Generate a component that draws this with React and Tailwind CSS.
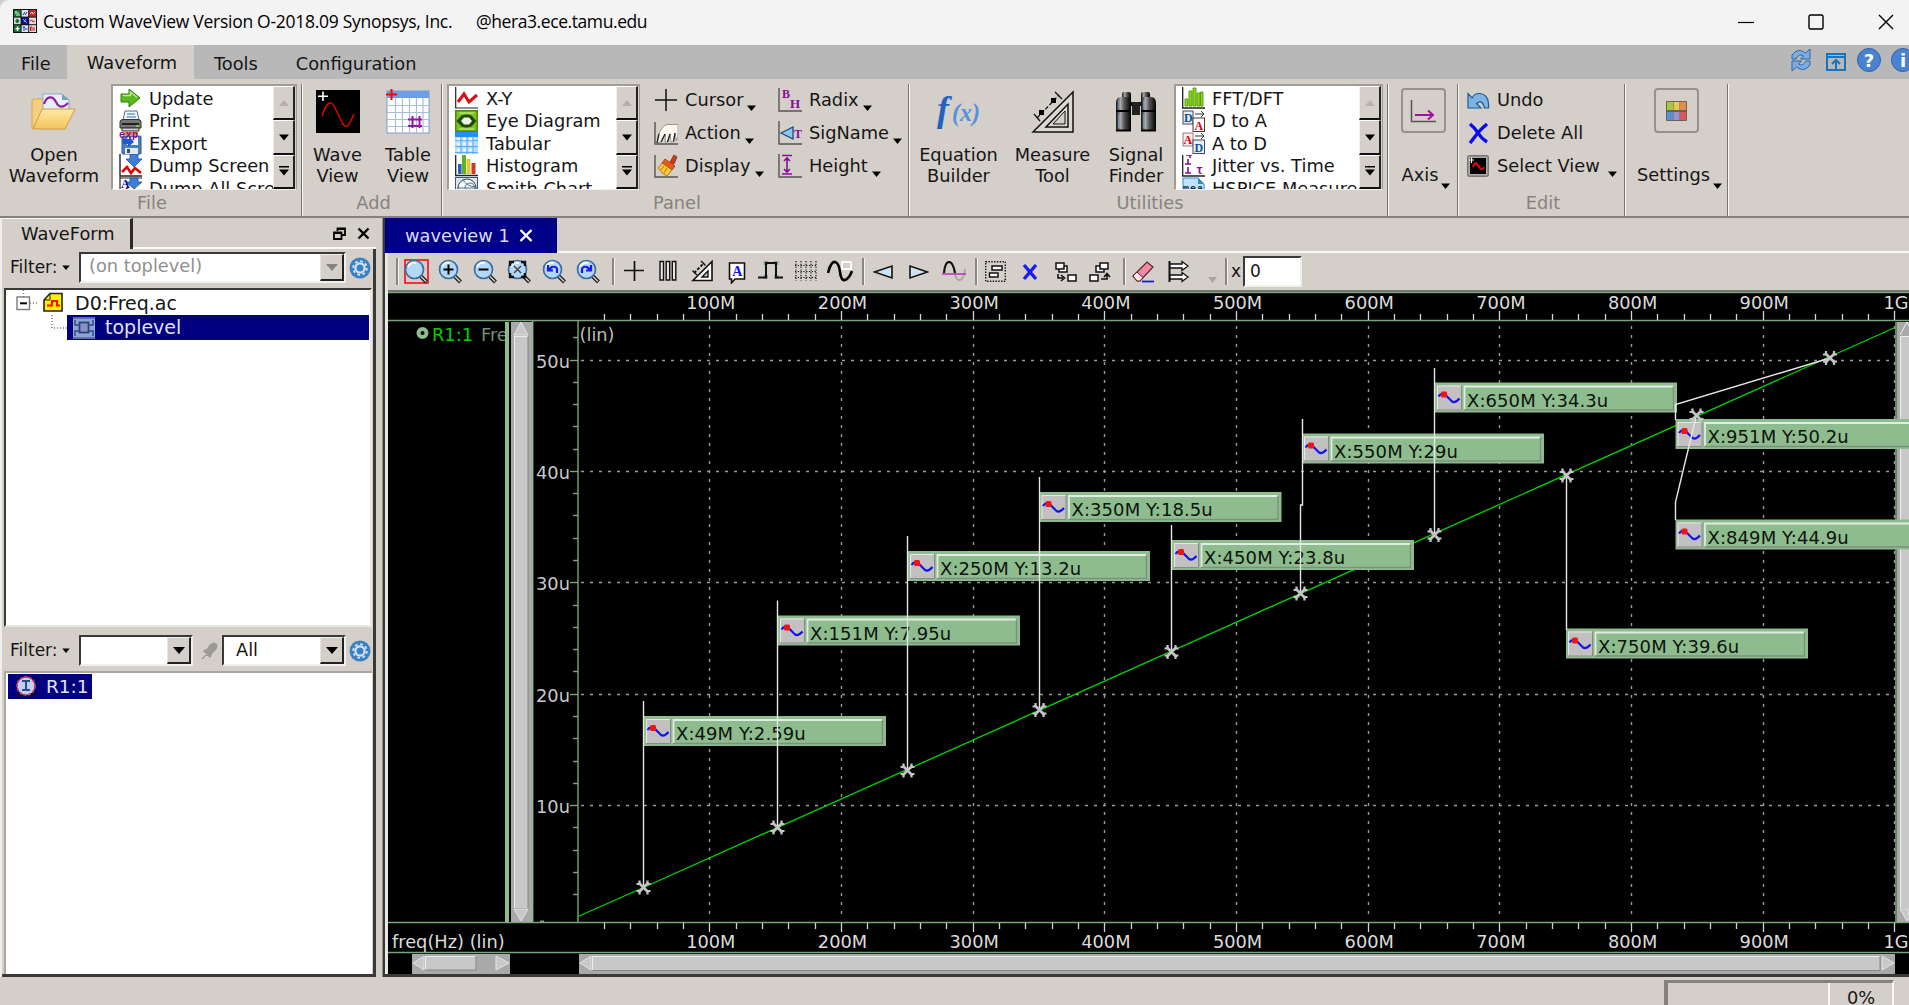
import React from "react";

/* ---------- generic helpers ---------- */

const Caret = ({ className = "" }) => (
  <svg width="9" height="6" viewBox="0 0 9 6" className={className}>
    <path d="M0 0.5H9L4.5 6Z" fill="#000" />
  </svg>
);

const Svg = ({ w = 24, h = 24, vb, children, className = "" }) => (
  <svg width={w} height={h} viewBox={vb || `0 0 ${w} ${h}`} fill="none" className={`shrink-0 ${className}`}>
    {children}
  </svg>
);

/* ---------- icons ---------- */

const AppLogo = () => (
  <Svg>
    <rect width="24" height="24" fill="#111" />
    <rect x="1" y="1" width="6.6" height="6.6" fill="#1c7a34" />
    <rect x="8.6" y="1" width="6.6" height="6.6" fill="#dfe3f0" />
    <rect x="16.2" y="1" width="6.8" height="6.6" fill="#c22a30" />
    <rect x="1" y="8.6" width="6.6" height="6.6" fill="#cfd8cf" />
    <rect x="8.6" y="8.6" width="6.6" height="6.6" fill="#0a1090" />
    <rect x="16.2" y="8.6" width="6.8" height="6.6" fill="#e6dada" />
    <rect x="1" y="16.2" width="6.6" height="6.8" fill="#16702c" />
    <rect x="8.6" y="16.2" width="6.6" height="6.8" fill="#dfe3f4" />
    <rect x="16.2" y="16.2" width="6.8" height="6.8" fill="#e8dcdc" />
    <path d="M2 4H6M3 6H7M2 3H4" stroke="#d5ecd5" />
    <path d="M10 6L12 3M12 6L14 3" stroke="#2034b0" />
    <path d="M17 5L19 3L20 5L22 3" stroke="#fbb" />
    <path d="M2.5 12H6M4.3 10V14" stroke="#16702c" strokeWidth="2" />
    <path d="M10 10L14 14M11 13L13 10" stroke="#8fa0ff" />
    <path d="M17 12L19 11L20 13L22 12" stroke="#c22a30" />
    <path d="M2.5 19.6H6.5M4.5 17.5V22" stroke="#fff" strokeWidth="1.4" />
    <path d="M9.5 18H12M11 18V22M12 20H14.5" stroke="#2034b0" />
    <path d="M17.5 22V18H19V22M21 18V22" stroke="#b02030" />
  </Svg>
);

const OpenFolder = () => (
  <Svg w={46} h={38}>
    <path d="M1 35V8Q1 6 3 6H12L15 10H36V20L30 35Z" fill="#f3cf80" stroke="#d6a548" />
    <path d="M12 1H31L38 7V22H12Z" fill="#e8f1fb" stroke="#8aa7c8" />
    <path d="M31 1V7H38Z" fill="#7f9cc0" />
    <path d="M13 11C16 2 22 3 25 9S32 15 37 10" stroke="#8d1ea8" strokeWidth="2.2" />
    <path d="M2 36L11 16H44L34 36Z" fill="url(#fold)" stroke="#d79a38" />
    <defs>
      <linearGradient id="fold" x1="0" y1="0" x2="0" y2="1">
        <stop offset="0" stopColor="#fde9a8" />
        <stop offset="1" stopColor="#f5c45a" />
      </linearGradient>
    </defs>
  </Svg>
);

const WaveViewIcon = () => (
  <Svg w={44} h={43}>
    <rect width="44" height="43" fill="#000" />
    <path d="M7 1.5V11M2 6.2H12" stroke="#fff" strokeWidth="1.6" />
    <path d="M6 26C10 14 14 9 18 16L27 34C31 40 34 33 38 24" stroke="#f00000" strokeWidth="1.4" />
  </Svg>
);

const TableViewIcon = () => (
  <Svg w={44} h={45}>
    <rect x="1" y="2" width="42" height="42" fill="#fff" stroke="#7f9cc8" />
    <rect x="1" y="2" width="42" height="7" fill="#6f9ee6" />
    <path d="M1 16.5H43M1 23.5H43M1 30.5H43M1 37.5H43M9.5 9V44M16.5 9V44M23.5 9V44M30.5 9V44M37 9V44" stroke="#a9bedb" strokeWidth="1.2" />
    <path d="M0 5.5H11M5.5 0V11" stroke="#f00" strokeWidth="2" />
    <path d="M26.5 27V39M33.5 27V39M22 30.5H36M22 37H36" stroke="#8f1a9c" strokeWidth="2" />
  </Svg>
);

const EquationIcon = () => (
  <svg width="50" height="42" viewBox="0 0 50 42">
    <text x="3" y="30" fontFamily="Liberation Serif, serif" fontStyle="italic" fontWeight="bold" fontSize="36" fill="#2263c0">f</text>
    <text x="18" y="30" fontFamily="Liberation Serif, serif" fontStyle="italic" fontWeight="bold" fontSize="26" fill="#5590dc" textLength="28" lengthAdjust="spacingAndGlyphs">(x)</text>
  </svg>
);

const MeasureIcon = ({ w = 44, h = 44 }) => (
  <Svg w={w} h={h} vb="0 0 44 44">
    <path d="M42 2V42H2Z" stroke="#111" strokeWidth="1.5" fill="#dcd8d2" />
    <path d="M37 14V37H15Z" stroke="#111" strokeWidth="1.5" />
    <path d="M34 21V34H22Z" stroke="#111" strokeWidth="1" fill="#d4cfc8" />
    <path d="M6 28L28 5" stroke="#111" strokeWidth="1.3" strokeDasharray="4 2" />
    <path d="M3 24L9 31M24 2L31 9" stroke="#111" strokeWidth="1.3" />
    <rect x="8" y="20" width="5" height="5" fill="#000" />
    <rect x="20" y="8" width="5" height="5" fill="#000" />
  </Svg>
);

const MeasureSmall = () => (
  <Svg w={22} h={22}>
    <path d="M21 1.5V20.500H2Z" stroke="#111" strokeWidth="1.6" fill="#fff" />
    <path d="M17 11V17H11Z" stroke="#111" strokeWidth="1.4" fill="#d4cfc8" />
    <path d="M3 13L13 3" stroke="#111" strokeWidth="1.8" strokeDasharray="3 1.6" />
    <path d="M1.500 10.500L6 15M10 1L14.500 5.500" stroke="#111" strokeWidth="1.4" />
  </Svg>
);

const Binoculars = () => (
  <Svg w={42} h={42}>
    <defs>
      <linearGradient id="bin" x1="0" x2="1" y1="0" y2="0">
        <stop offset="0" stopColor="#111" />
        <stop offset="0.3" stopColor="#aaa" />
        <stop offset="0.55" stopColor="#555" />
        <stop offset="1" stopColor="#000" />
      </linearGradient>
    </defs>
    <rect x="14" y="11" width="14" height="4" fill="#111" />
    <rect x="17" y="11" width="8" height="13" fill="#222" />
    <rect x="7" y="1" width="9" height="9" rx="2" fill="url(#bin)" />
    <rect x="26" y="1" width="9" height="9" rx="2" fill="url(#bin)" />
    <path d="M1 12Q1 6 6 6H16V40H1Z" fill="url(#bin)" />
    <path d="M26 6H36Q41 6 41 12V40H26Z" fill="url(#bin)" />
    <path d="M1 20H16M26 20H41M1 39.5H16M26 39.5H41" stroke="#000" strokeWidth="2" />
    <path d="M4 9V18M4 23V37M29 9V18M29 23V37" stroke="#7fb0d8" />
  </Svg>
);

const I = {
  update: (
    <Svg w={23} h={22}>
      <path d="M2 7H10V2L21 11L10 20V15H2Z" fill="#5cb81e" stroke="#2f7a08" />
      <path d="M3.5 8.5H11.5V5L18 10.5" stroke="#b9ec8a" strokeWidth="1.4" />
    </Svg>
  ),
  print: (
    <Svg w={23} h={22}>
      <path d="M6 1H18L20 10H4Z" fill="#f4f8fc" stroke="#5b6b80" />
      <path d="M8 4H16M7.5 7H17" stroke="#6b9bd0" strokeWidth="1.3" />
      <path d="M1 12Q1 9.5 4 9.5H19Q22 9.5 22 12V18H1Z" fill="#777" stroke="#333" />
      <path d="M3 18H20V21H3Z" fill="#ccc" stroke="#333" />
      <path d="M3 14H20" stroke="#222" strokeWidth="2" />
      <rect x="17" y="15" width="3" height="2" fill="#5fdc3c" />
    </Svg>
  ),
  exp: (
    <Svg w={23} h={23}>
      <rect x="3" y="4" width="19" height="18" rx="1" fill="#4d7fbd" stroke="#2a568f" />
      <rect x="8" y="5" width="11" height="8" fill="#eef4fa" />
      <rect x="6" y="16" width="13" height="6" fill="#dfe8ee" />
      <rect x="8" y="17" width="3" height="4" fill="#405060" />
      <path d="M4 7L10 7V4L15 10L9 15V12H4Z" fill="#1f58d0" />
      <rect x="5" y="0" width="14" height="3" fill="#ff8a1c" />
      <text x="0" y="6" fontSize="10" fontWeight="bold" fontFamily="Liberation Mono" fill="#8a0c9c" textLength="19">exp</text>
    </Svg>
  ),
  dump: (
    <Svg w={23} h={23}>
      <path d="M1 0V22H23" stroke="#222" strokeWidth="1.4" />
      <path d="M11 0H19V5H23L15 13L7 5H11Z" fill="#3d7fd6" stroke="#1c4f9c" strokeWidth="0.8" />
      <path d="M3 18L8 13L12 19L16 14L22 19" stroke="#e00000" strokeWidth="2.6" />
    </Svg>
  ),
  dumpAll: (
    <Svg w={23} h={23}>
      <path d="M1 0V22H23M1 1H23" stroke="#222" strokeWidth="1.2" />
      <path d="M11 1H19V5H23L15 12L7 5H11Z" fill="#3d7fd6" stroke="#1c4f9c" strokeWidth="0.8" />
      <text x="2" y="11" fontSize="12" fontWeight="bold" fontFamily="Liberation Serif" fill="#00109a">A</text>
      <path d="M3 18L8 12L12 18L16 13L22 18" stroke="#e00000" strokeWidth="2.4" />
    </Svg>
  ),
  xy: (
    <Svg w={23} h={22}>
      <path d="M0.7 0V21H23" stroke="#222" strokeWidth="1.2" />
      <path d="M3 15L9 7L14 15L22 8" stroke="#dc0c14" strokeWidth="3" />
    </Svg>
  ),
  eye: (
    <Svg w={23} h={22}>
      <rect width="23" height="22" fill="#4c8a0c" />
      <rect x="1.5" y="1.5" width="20" height="19" fill="#7cc31e" />
      <path d="M1.500 11L6.500 5.500Q11.500 3.500 16.500 5.500L21.500 11L16.500 16.500Q11.500 18.500 6.500 16.500Z" fill="#1f4a06" />
      <path d="M6 11L9 7.500H14L17 11L14 14.500H9Z" fill="#eef4e2" />
      <path d="M4 3H19M4 19H19" stroke="#b4e468" strokeWidth="1.4" />
    </Svg>
  ),
  tab: (
    <Svg w={23} h={22}>
      <rect width="23" height="22" fill="#b6dcff" />
      <rect width="23" height="5" fill="#1e90ff" />
      <path d="M0 8.5H23M0 14.5H23M0 20.5H23M6 5V22M12 5V22M18 5V22" stroke="#4ea7f4" strokeWidth="0.9" />
      <path d="M2 7H5M8 7H11M14 7H17M2 12H5M8 12H11M14 12H17M2 18H5M8 18H11M14 18H17" stroke="#eef8ff" strokeWidth="2.4" />
    </Svg>
  ),
  hist: (
    <Svg w={23} h={22}>
      <path d="M0.7 0V20.5H23" stroke="#222" strokeWidth="1.3" />
      <rect x="3" y="9" width="3.6" height="10" fill="#2860b8" />
      <rect x="7" y="0" width="4" height="19" fill="#5ab428" />
      <rect x="11.5" y="4" width="4" height="15" fill="#e6c63a" />
      <rect x="16.5" y="8" width="4" height="11" fill="#cc3a2a" />
    </Svg>
  ),
  smith: (
    <Svg w={23} h={22}>
      <rect x="0.5" y="0.5" width="22" height="21" fill="#dbe7f0" stroke="#44566a" />
      <circle cx="12" cy="11" r="9" stroke="#34465a" fill="#f6fafc" />
      <circle cx="15" cy="11" r="5" stroke="#4f7390" />
      <path d="M2 11H22M8 2Q10 9 21 10" stroke="#4f7390" />
    </Svg>
  ),
  fft: (
    <Svg w={23} h={22}>
      <path d="M0.7 0V21H23" stroke="#222" strokeWidth="1.3" />
      <path d="M3 12H6V19H3ZM7 4H10V19H7ZM11 1H14V19H11ZM15 6H18V19H15ZM18.5 5H21V19H18.5Z" fill="#8ed51c" stroke="#4c9a06" strokeWidth="0.9" />
    </Svg>
  ),
  d2a: (
    <Svg w={23} h={22}>
      <rect x="1" y="1" width="10" height="13" fill="#e4edf6" stroke="#446" />
      <text x="2" y="11.5" fontSize="12" fontWeight="bold" fontFamily="Liberation Serif" fill="#154f96">D</text>
      <path d="M13 4H21M19 1L22 4L19 7" stroke="#333" />
      <rect x="11" y="8" width="11.5" height="13.5" fill="#fff" stroke="#533" />
      <text x="12.5" y="19.5" fontSize="12" fontWeight="bold" fontFamily="Liberation Serif" fill="#e00010">A</text>
    </Svg>
  ),
  a2d: (
    <Svg w={23} h={22}>
      <rect x="1" y="1" width="10" height="13" fill="#fbeaea" stroke="#533" strokeWidth="0.6" />
      <text x="1.5" y="11.5" fontSize="12" fontWeight="bold" fontFamily="Liberation Serif" fill="#e00010">A</text>
      <path d="M13 4H21M19 1L22 4L19 7" stroke="#333" />
      <rect x="11" y="8" width="11.5" height="13.5" fill="#e4f2fb" stroke="#446" />
      <text x="12.5" y="19.5" fontSize="12" fontWeight="bold" fontFamily="Liberation Serif" fill="#154f96">D</text>
    </Svg>
  ),
  jitter: (
    <Svg w={23} h={22}>
      <path d="M0.7 0V21H23" stroke="#222" strokeWidth="1.3" />
      <path d="M3 18H9M6 12V18M3 9H9M6 4V9M4 0H10M8 0V3" stroke="#8a0c9c" strokeWidth="1.6" />
      <text x="14" y="19" fontSize="12" fontWeight="bold" fontFamily="Liberation Mono" fill="#8a0c9c">τ</text>
    </Svg>
  ),
  hspice: (
    <Svg w={23} h={22}>
      <path d="M1 1H16L22 7V21H1Z" fill="#bfe4fb" stroke="#2a8fd0" />
      <path d="M16 1V7H22Z" fill="#2a8fd0" />
      <text x="1" y="15" fontSize="10" fontWeight="bold" fontFamily="Liberation Mono" fill="#102c48" textLength="20">mea</text>
    </Svg>
  ),
  cursor: (
    <Svg w={24} h={24}>
      <path d="M12 1V23M1 12H23" stroke="#111" strokeWidth="1.5" />
    </Svg>
  ),
  action: (
    <Svg w={24} h={24}>
      <path d="M1 1V23H24" stroke="#555" strokeWidth="1.4" />
      <path d="M3 22L4.500 14Q7 6 13 3.500H24V16L22.500 19.500L21 12L19.500 20.500L17 21L16 13L13.500 21H11L11.500 13L7 21Z" fill="#fdf8ee" stroke="#8a8274" strokeWidth="0.8" />
      <path d="M3 22L5 13M7 21L11 13M13.500 21L16 13M19.500 20.500L21 12" stroke="#222" strokeWidth="1.3" />
    </Svg>
  ),
  display: (
    <Svg w={24} h={24}>
      <path d="M1 1V23H24" stroke="#555" strokeWidth="1.4" />
      <path d="M16 8L20 1L23 3L20 10Z" fill="#cc3f14" stroke="#7a2008" strokeWidth="0.7" />
      <path d="M11 5L21 12L18 16L8 9Z" fill="#e8571c" stroke="#8a2a0a" strokeWidth="0.7" />
      <path d="M8 9L18 16L13 22Q8 20 4 14Z" fill="#f7c83c" stroke="#a0680c" strokeWidth="0.8" />
      <path d="M7 16L10 12M10 19L13 14" stroke="#b8780c" />
    </Svg>
  ),
  radix: (
    <Svg w={24} h={24}>
      <path d="M1 0V23H24" stroke="#555" strokeWidth="1.4" />
      <text x="4" y="9.5" fontSize="12" fontWeight="bold" fontFamily="Liberation Serif" fill="#8a0c9c">B</text>
      <text x="12" y="20" fontSize="13" fontWeight="bold" fontFamily="Liberation Serif" fill="#8a0c9c">H</text>
    </Svg>
  ),
  signame: (
    <Svg w={24} h={24}>
      <path d="M1 0V23H24" stroke="#555" strokeWidth="1.4" />
      <path d="M3 12L15 6V18Z" fill="#8cc4ea" stroke="#1b4c7c" strokeWidth="1.3" />
      <text x="16" y="17" fontSize="12" fontWeight="bold" fontFamily="Liberation Serif" fill="#8a0c9c">T</text>
    </Svg>
  ),
  height: (
    <Svg w={24} h={24}>
      <path d="M1 0V23H24" stroke="#555" strokeWidth="1.4" />
      <path d="M4 1.5H14M4 20H14M9 4V18M6 7L9 4L12 7M6 15L9 18L12 15" stroke="#8a0c9c" strokeWidth="1.6" />
    </Svg>
  ),
  undo: (
    <Svg w={23} h={20}>
      <path d="M1 3.500V18H14L9.500 13.500Q15 8.500 17.500 18H21.500Q22.500 3.500 11.500 3.500Q7.500 3.500 5 8Z" fill="#7db4e4" stroke="#1f5a96" strokeWidth="1.2" />
    </Svg>
  ),
  del: (
    <Svg w={23} h={22}>
      <path d="M3 2Q8 6 11 11T20 20M20 2Q13 8 10 12T3 21" stroke="#0a0af0" strokeWidth="3.4" />
    </Svg>
  ),
  sel: (
    <Svg w={22} h={22}>
      <rect x="0.7" y="0.7" width="20.6" height="20.6" rx="2" fill="#aaa" stroke="#777" strokeWidth="1.4" />
      <rect x="3" y="3" width="16" height="16" fill="#000" />
      <path d="M6 12Q8 5 11.500 11T17 12" stroke="#f00" strokeWidth="1.8" />
      <path d="M2 5H7M4.5 2.5V8" stroke="#fff" strokeWidth="1.2" />
    </Svg>
  ),
};

/* ---------- ribbon parts ---------- */

const Sep = () => <div className="mt-[5px] h-[132px] w-[2px] shrink-0 border-r border-l border-r-[#f8f8f5] border-l-[#77746e]" />;

const Group = ({ label, className, children }) => (
  <div className={`flex shrink-0 flex-col ${className}`}>
    <div className="flex h-[112px]">{children}</div>
    <div className="h-[22px] pl-[3px] text-center leading-[23px] text-[#86837c]">{label}</div>
  </div>
);

const Tall = ({ icon, lines, className }) => (
  <div className={`flex shrink-0 flex-col items-center ${className}`}>
    <div className="flex h-[65px] items-center pb-[1px] pt-[1px]">{icon}</div>
    {lines.map((l) => (
      <div key={l} className="h-[20.5px] text-center leading-[21px] whitespace-nowrap">{l}</div>
    ))}
  </div>
);

const ListBox = ({ items, className, gap = "gap-[8px]" }) => (
  <div className={`mt-[5px] flex h-[106px] shrink-0 border-t-2 border-r border-b border-l-2 border-[#a19d95] border-b-[#f4f2ee] border-r-[#a19d95] pr-[1px] ${className}`}>
    <div className="h-[103px] flex-1 overflow-hidden bg-white pt-[1px] pl-[6px]">
      {items.map(([icon, text]) => (
        <div key={text} className={`flex h-[22.5px] items-center leading-[22.5px] whitespace-nowrap ${gap}`}>
          {icon}
          <span className="mt-px">{text}</span>
        </div>
      ))}
    </div>
    <div className="h-[103px] w-[22px] shrink-0">
      {["#b5b1aa", "#000", "#000"].map((c, i) => (
        <div key={i} className="flex h-[34.3px] items-center justify-center border-t border-r-2 border-b-2 border-l border-t-white border-r-[#222] border-b-[#111] border-l-[#f2f0ec] bg-[#d4cfc8]">
          <svg width="12" height="10" viewBox="0 0 12 10">
            {i === 0 && <path d="M1 8H11L6 2Z" fill={c} />}
            {i === 1 && <path d="M1 2.5H11L6 8.5Z" fill={c} />}
            {i === 2 && <path d="M1 0H11V1.500H1ZM1 3.500H11L6 9.500Z" fill={c} />}
          </svg>
        </div>
      ))}
    </div>
  </div>
);

const SmallBtn = ({ icon, text, caret, gap = "gap-[7px]", caretClass = "ml-[4px]" }) => (
  <div className={`flex h-[33.2px] items-center leading-[33px] whitespace-nowrap ${gap}`}>
    {icon}
    <span className="flex items-center">
      {text}
      {caret && <Caret className={`mt-[17px] ${caretClass}`} />}
    </span>
  </div>
);

const BoxBtn = ({ children, text, className }) => (
  <div className={`flex flex-col items-center ${className}`}>
    <div className="mt-[9px] flex h-[45px] w-[45px] items-center justify-center rounded-[4px] border-2 border-[#95928c]">{children}</div>
    <div className="mt-[32px] flex h-[20px] items-center pl-[6px] leading-[20px]">
      {text}
      <Caret className="mt-[22px] ml-[3px]" />
    </div>
  </div>
);

/* ---------- left panel parts ---------- */

const Gear = () => (
  <Svg w={22} h={22}>
    <circle cx="11" cy="11" r="10.5" fill="#3b82c4" />
    <circle cx="11" cy="11" r="4.6" stroke="#d7e6f4" strokeWidth="2.2" />
    <circle cx="11" cy="11" r="6.8" stroke="#d7e6f4" strokeWidth="1.8" strokeDasharray="2.7 2.64" />
  </Svg>
);

const Combo = ({ text, className, disabled }) => (
  <div className={`flex shrink-0 border-2 border-t-[#3a3935] border-r-[#f1efeb] border-b-[#f1efeb] border-l-[#3a3935] bg-white ${className}`}>
    <div className={`flex flex-1 items-center ${disabled ? "pb-[2px] pl-[8px] text-[#8f8f8f]" : "pl-[12px]"}`}>{text}</div>
    <div className="flex w-[24px] items-center justify-center border-t border-r-2 border-b-2 border-l border-t-[#eee] border-r-[#222] border-b-[#222] border-l-[#e6e4e0] bg-[#d4cfc8]">
      <svg width="12" height="7" viewBox="0 0 12 7">
        <path d="M0 0H12L6 7Z" fill={disabled ? "#86837c" : "#000"} />
      </svg>
    </div>
  </div>
);

const LeftPanel = () => (
  <div className="flex w-[376px] shrink-0 flex-col border-l-2 border-[#f0eeea]">
    <div className="flex h-[31px]">
      <div className="w-[131px] border-t border-r-[3px] border-t-[#f8f8f5] border-r-[#2c2b28] pl-[19px] leading-[30px]">WaveForm</div>
      <div className="flex flex-1 items-start border-b-2 border-[#f8f8f5] pt-[9px] pl-[200px]">
        <Svg w={13} h={13}>
          <path d="M4.5 4V1.5H12V8H9M4 2H12" stroke="#000" strokeWidth="1.8" />
          <path d="M1 5.5H8.5V12H1ZM1 6H8.5" stroke="#000" strokeWidth="1.8" />
        </Svg>
        <Svg w={13} h={13} className="ml-[11px]">
          <path d="M1.5 1.5L11.5 11.5M11.5 1.5L1.5 11.5" stroke="#000" strokeWidth="2.4" />
        </Svg>
      </div>
    </div>
    <div className="flex min-h-0 flex-1 flex-col border-r-[3px] border-b-[3px] border-[#3a3935]">
      <div className="flex h-[39px] items-center pb-[2px] pl-[8px]">
        <span className="w-[52px] text-[17px]">Filter:</span>
        <Caret className="h-[5px] w-[8px]" />
        <Combo text="(on toplevel)" disabled className="ml-[9px] h-[31px] w-[267px]" />
        <div className="ml-[3px]"><Gear /></div>
      </div>
      <div className="ml-[2px] h-[339px] w-[368px] border-2 border-t-[#3a3935] border-r-[#e9e7e3] border-b-[#e9e7e3] border-l-[#3a3935] bg-white text-[19px]">
        <div className="flex h-[25px] items-center pl-[10px] leading-[26px]">
          <Svg w={47} h={26}>
            <path d="M7.5 0V7M14 13H22" stroke="#777" strokeDasharray="1 2" strokeWidth="1.5" />
            <rect x="1" y="7" width="12.5" height="12.5" fill="#fff" stroke="#7a7a7a" strokeWidth="1.4" />
            <path d="M4 13.3H11" stroke="#000" strokeWidth="2" />
            <path d="M28 10L34 3.5H46V21H28Z" fill="#ffee00" stroke="#222" strokeWidth="1.6" />
            <path d="M28 10H34V4" stroke="#222" />
            <path d="M31 15.5H36V11H41V15.5H44" stroke="#f01400" strokeWidth="2.2" />
          </Svg>
          <span className="ml-[12px]">D0:Freq.ac</span>
        </div>
        <div className="flex h-[25px] items-center pr-[1px]">
          <Svg w={61} h={25}>
            <path d="M46 0V13H61" stroke="#777" strokeDasharray="1 2" strokeWidth="1.5" />
          </Svg>
          <div className="flex h-[25px] flex-1 items-center bg-[#000080] pl-[6px] leading-[25px] text-[#e2e2f2]">
            <Svg w={22} h={22}>
              <rect width="22" height="22" fill="#93a3d6" />
              <path d="M0 21H22M0 1H22" stroke="#5f6da8" strokeWidth="2" />
              <rect x="6.5" y="5.5" width="9" height="10" fill="#8f8fc8" stroke="#27457c" strokeWidth="1.8" />
              <path d="M2 3V8H6M2 19V14H6M20 3V8H16M20 19V14H16" stroke="#1f5080" strokeWidth="1.4" />
            </Svg>
            <span className="ml-[10px]">toplevel</span>
          </div>
        </div>
      </div>
      <div className="flex h-[44px] items-center pt-[3px] pl-[8px]">
        <span className="w-[52px] text-[17px]">Filter:</span>
        <Caret className="h-[5px] w-[8px]" />
        <Combo text="" className="ml-[9px] h-[31px] w-[114px]" />
        <Svg w={17} h={18} className="ml-[8px]">
          <path d="M1 17L7 11M3 9L9 15L11 11L15 7L16 3L13 1L9 3L7 7Z" fill="#9d9a94" stroke="#9d9a94" strokeWidth="1.4" />
        </Svg>
        <Combo text="All" className="ml-[4px] h-[31px] w-[124px]" />
        <div className="ml-[3px]"><Gear /></div>
      </div>
      <div className="ml-[2px] min-h-0 w-[368px] flex-1 border-t-2 border-l-2 border-[#aaa69f] bg-white pt-px pl-[2px]">
        <div className="flex h-[25px] w-[84px] items-center bg-[#000080] pl-[6px] text-[18.5px] leading-[25px] text-[#e2e2f2]">
          <Svg w={24} h={23}>
            <path d="M1 19L4 22L7 19L10 22L13 19L16 22L20 18L23 22" stroke="#111" strokeWidth="1.2" />
            <circle cx="12" cy="11" r="9" fill="#c3cfec" stroke="#c83c5c" strokeWidth="1.8" strokeDasharray="3 1.5" />
            <path d="M8 6H16M8 15H16M12 6V15" stroke="#2a4f8c" strokeWidth="2" />
          </Svg>
          <span className="ml-[8px]">R1:1</span>
        </div>
      </div>
    </div>
  </div>
);

/* ---------- toolbar above the plot ---------- */

const Lens = ({ children, framed }) => (
  <Svg w={25} h={25}>
    {framed && <rect x="1" y="1" width="23" height="23" stroke="#f01010" strokeWidth="1.6" />}
    <path d="M15.5 16L22.5 23" stroke="#222" strokeWidth="4" />
    <path d="M16 16.5L22 22.5" stroke="#c8c8c8" strokeWidth="1.6" />
    <circle cx="10.5" cy="10.5" r="9" fill="#b5d8f8" stroke="#3a6ea5" strokeWidth="1.7" />
    <path d="M4 8Q6 3 12 4" stroke="#f2faff" strokeWidth="2" />
    {children}
  </Svg>
);

const TSep = () => <div className="h-[27px] w-[3px] shrink-0 border-r border-l-2 border-r-[#f4f2ee] border-l-[#8a8780]" />;

const Toolbar = () => (
  <div className="flex h-[37px] items-center bg-[#d4cfc8] pl-[8px]">
    <TSep />
    <div className="ml-[5px] flex gap-[9.4px]">
      <Lens framed />
      <Lens><path d="M5.5 10.5H15.5M10.5 5.5V15.5" stroke="#000" strokeWidth="2" /></Lens>
      <Lens><path d="M5.5 10.5H15.5" stroke="#000" strokeWidth="2" /></Lens>
      <Lens><path d="M7 7L14 14M14 7L7 14" stroke="#444" strokeWidth="1.5" /><path d="M3 7V3H7M14 3H18V7M3 14V18H7M18 14V18H14" stroke="#111" strokeWidth="2.4" /></Lens>
      <Lens><path d="M15 14V10Q14 7 10 8L6 11M6 6V11.5H11" stroke="#1a1af0" strokeWidth="2.2" /></Lens>
      <Lens><path d="M6 14V10Q7 7 11 8L15 11M15 6V11.5H10" stroke="#1a1af0" strokeWidth="2.2" /></Lens>
    </div>
    <div className="ml-[11px]"><TSep /></div>
    <div className="ml-[9px] flex">
      <Svg w={20} h={22}><path d="M10.5 1V21M0 10.5H20" stroke="#111" strokeWidth="1.7" /></Svg>
      <Svg w={18} h={22} className="ml-[15px]"><path d="M1 1.5H4.5V20H1ZM7.2 1.5H10.7V20H7.2ZM13.3 1.5H16.8V20H13.3Z" stroke="#111" strokeWidth="1.4" fill="#e8e5e0" /></Svg>
      <div className="ml-[14px]"><MeasureSmall /></div>
      <Svg w={18} h={24} className="ml-[15px]">
        <path d="M1.5 3H16.5V19H7L3.5 23V19H1.5Z" stroke="#111" strokeWidth="1.6" fill="#fff" />
        <text x="4.2" y="16" fontFamily="Liberation Serif" fontWeight="bold" fontSize="14" fill="#1414f0">A</text>
      </Svg>
      <Svg w={26} h={22} className="ml-[12px]">
        <path d="M5.5 1H10V5H5.5ZM16 1H20.5V5H16ZM5.5 15H10V19H5.5ZM16 15H20.5V19H16Z" fill="#4d8c8c" fillOpacity="0.6" />
        <path d="M0 17.500H8V3H18V17.500H25" stroke="#111" strokeWidth="2" />
      </Svg>
      <Svg w={22} h={22} className="ml-[11px]"><path d="M1 1V21M6 1V21M11 1V21M16 1V21M21 1V21M0 5.5H22M0 11.5H22M0 17.5H22" stroke="#111" strokeWidth="1.2" strokeDasharray="1.2 1.6" /></Svg>
      <Svg w={26} h={23} className="ml-[10px]">
        <path d="M1 13Q4 1 8 2T13 12T18 20T25 11" stroke="#000" strokeWidth="2.6" />
        <rect x="15" y="2" width="9" height="7" stroke="#fff" strokeWidth="1.8" />
      </Svg>
    </div>
    <div className="ml-[9px]"><TSep /></div>
    <div className="ml-[8px] flex">
      <Svg w={20} h={22}><path d="M1.5 11L19 5V17Z" stroke="#111" strokeWidth="1.6" fill="#cfe2f2" /></Svg>
      <Svg w={20} h={22} className="ml-[16px]"><path d="M18.500 11L1 5V17Z" stroke="#111" strokeWidth="1.600" fill="#cfe2f2" /></Svg>
      <Svg w={24} h={22} className="ml-[13px]">
        <path d="M2 12Q3 1 7 1T13 12" stroke="#111" strokeWidth="2.2" />
        <path d="M13 12Q14 20 18 19T23 8" stroke="#aaa69f" strokeWidth="2" />
        <path d="M0 13H24" stroke="#c832c8" strokeWidth="1.6" />
      </Svg>
    </div>
    <div className="ml-[9px]"><TSep /></div>
    <div className="ml-[7px] flex">
      <Svg w={21} h={21}>
        <rect x="0.7" y="0.7" width="19.6" height="19.600" stroke="#111" strokeWidth="1.4" strokeDasharray="1.4 1.4" />
        <path d="M7 5H17V9H7ZM4.500 12H13V16H4.500Z" stroke="#111" strokeWidth="1.5" fill="#fff" />
      </Svg>
      <Svg w={16} h={21} className="ml-[16px]"><path d="M2 4L14 18M14 4L2 18" stroke="#1a1af0" strokeWidth="3.4" /></Svg>
      <Svg w={22} h={22} className="ml-[17px]">
        <path d="M1 2H9V8H1ZM4 8V11H12V5H9M13 14H21V20H13Z" stroke="#111" strokeWidth="1.5" fill="#fff" />
        <path d="M3 13V17H8M6 14L9.500 17L6 20" stroke="#111" strokeWidth="1.6" />
      </Svg>
      <Svg w={22} h={22} className="ml-[12px]">
        <path d="M11 2H19V8H11ZM11 5H7V11H15V8M1 14H9V20H1Z" stroke="#111" strokeWidth="1.5" fill="#fff" />
        <path d="M12 18H18V13M15 16L18 12.500L21 16" stroke="#111" strokeWidth="1.6" />
      </Svg>
    </div>
    <div className="ml-[12px]"><TSep /></div>
    <div className="ml-[6px] flex items-center">
      <Svg w={23} h={23}>
        <path d="M1 16L15 2L21 7L8 21H5Z" fill="#f08ca0" stroke="#5c2030" strokeWidth="1.2" />
        <path d="M1 16L5 12L11 17.500L8 21H5Z" fill="#fbe4e6" stroke="#5c2030" strokeWidth="1" />
        <path d="M10 21.500H22" stroke="#1a1af0" strokeWidth="1.800" />
      </Svg>
      <Svg w={22} h={23} className="ml-[13px]">
        <path d="M1.500 1V22" stroke="#111" strokeWidth="2" />
        <path d="M2 4H14V1.500L20 6L14 10.500V8H2ZM2 15H14V12.500L20 17L14 21.500V19H2Z" fill="#fff" stroke="#111" strokeWidth="1.3" />
      </Svg>
      <svg width="9" height="6" viewBox="0 0 9 6" className="mt-[17px] ml-[18px]"><path d="M0 0H9L4.500 6Z" fill="#a9a69f" /></svg>
    </div>
    <div className="ml-[8px]"><TSep /></div>
    <span className="ml-[3px] text-[17px]">x</span>
    <div className="ml-[2px] flex h-[31px] w-[59px] items-center border-2 border-t-[#3a3935] border-r-[#f1efeb] border-b-[#f1efeb] border-l-[#3a3935] bg-white pl-[5px] text-[17px]">0</div>
  </div>
);

/* ---------- plot ---------- */

const GREEN = "#8fbc8f";
const tickX = (n) => 190 + 131.68 * n;
const tickY = (n) => 625 - 111.4 * n;

const MARKERS = [
  { t: "X:49M Y:2.59u", px: 255.5, py: 595.5, bx: 256, by: 424, line: "255.5,409 255.5,595" },
  { t: "X:151M Y:7.95u", px: 389.5, py: 535.5, bx: 390, by: 323.5, line: "389.5,308.5 389.5,535" },
  { t: "X:250M Y:13.2u", px: 519.5, py: 478.5, bx: 520, by: 259, line: "519.5,244 519.5,478" },
  { t: "X:350M Y:18.5u", px: 651.5, py: 418, bx: 651.5, by: 200, line: "651.5,185 651.5,418" },
  { t: "X:450M Y:23.8u", px: 783.5, py: 360, bx: 784, by: 248, line: "783.5,233 783.5,360" },
  { t: "X:550M Y:29u", px: 912.5, py: 301.500, bx: 914, by: 141.500, line: "914.5,127 914.5,213 912.5,213 912.5,301" },
  { t: "X:650M Y:34.3u", px: 1046.5, py: 243, bx: 1047, by: 90.5, line: "1046.5,76 1046.5,243" },
  { t: "X:750M Y:39.6u", px: 1178.5, py: 183.500, bx: 1178, by: 336.5, line: "1178.5,183 1178.5,338" },
  { t: "X:951M Y:50.2u", px: 1442, py: 66, bx: 1287.5, by: 127, line: "1442,66 1287.5,112.5 1287.5,128" },
  { t: "X:849M Y:44.9u", px: 1308.5, py: 123.5, bx: 1287.5, by: 227.5, line: "1308.5,123 1287.5,210 1287.5,228" },
];

const minorTicks = Array.from({ length: 50 }, (_, i) => i + 1);
const decades = Array.from({ length: 10 }, (_, i) => i + 1);

const Plot = () => (
  <svg width="1521" height="682" viewBox="0 0 1521 682" className="block" fontFamily="DejaVu Sans, sans-serif" fontSize="17.8">
    <rect width="1521" height="682" fill="#000" />
    <path d="M0 0.5H1521M0 28.500H1521M0 630.5H1521M0 660.5H1521" stroke="#7ba67b" strokeWidth="1.4" />

    {/* rulers */}
    {minorTicks.map((i) => {
      const x = Math.round(189.500 + 26.336 * i) + 0.5;
      const major = i % 5 === 0;
      return <path key={i} d={`M${x} ${major ? 19 : 22}V28M${x} 631V${major ? 640 : 637}`} stroke="#d4d4d4" strokeWidth="1.3" />;
    })}
    {decades.map((n) => (
      <g key={n} fill="#dcdcdc">
        <text x={n < 10 ? tickX(n) - 23.5 : 1495.5} y="17">{n < 10 ? `${n}00M` : "1G"}</text>
        <text x={n < 10 ? tickX(n) - 23.5 : 1495.5} y="656">{n < 10 ? `${n}00M` : "1G"}</text>
        <path d={`M${Math.round(tickX(n) - 0.500) + 0.5} 34V628`} stroke="#9a9a9a" strokeWidth="1.4" strokeDasharray="3 6" />
      </g>
    ))}
    <text x="4" y="656" fill="#dcdcdc">freq(Hz) (lin)</text>

    {/* vertical axis */}
    <path d="M190 29V630" stroke="#7ba67b" strokeWidth="1.4" />
    {Array.from({ length: 26 }, (_, i) => i + 1).map((i) => {
      const y = Math.round(624.500 - 22.28 * i) + 0.5;
      return <path key={i} d={`M${i % 5 ? 185 : 182} ${y}H190`} stroke="#7ba67b" strokeWidth="1.4" />;
    })}
    {[1, 2, 3, 4, 5].map((n) => (
      <g key={n}>
        <text x="148" y={tickY(n) + 7.5} fill="#c8c8c8">{`${n}0u`}</text>
        <path d={`M193 ${Math.round(tickY(n) - 0.500) + 0.5}H1507`} stroke="#9a9a9a" strokeWidth="1.4" strokeDasharray="3 6" />
      </g>
    ))}
    <path d="M152 629.3H156" stroke="#7ba67b" strokeWidth="1.6" />
    <text x="191.500" y="48.500" fill="#bdbdbd">(lin)</text>

    {/* signal list column */}
    <circle cx="34.5" cy="41" r="4" fill="none" stroke={GREEN} strokeWidth="4" />
    <text x="44" y="48.500" fill="#00d000">R1:1</text>
    <text x="93" y="48.500" fill="#6f946f">Fre</text>
    <rect x="117" y="30" width="6" height="600" fill="#000" />
    <rect x="117" y="30" width="4" height="600" fill={GREEN} />
    <rect x="123" y="30" width="21" height="600" fill="#a9a9a9" />
    <rect x="126" y="44" width="14" height="572" fill="#c8c8c8" />
    <path d="M126.500 616V44.5H140" stroke="#eee" fill="none" />
    <path d="M140 44V616.500H126" stroke="#888" fill="none" />
    <path d="M126 43L133 30L140 43Z" fill="#c8c8c8" stroke="#e4e4e4" />
    <path d="M126 617L133 629L140 617Z" fill="#c8c8c8" stroke="#e4e4e4" />
    <path d="M144.700 29V630" stroke={GREEN} strokeWidth="1.4" />

    {/* right scrollbar */}
    <rect x="1509" y="30" width="12" height="600" fill="#a9a9a9" />
    <rect x="1512" y="44" width="9" height="572" fill="#c8c8c8" />
    <path d="M1512.500 616V44.5H1521M1512 43L1519 30L1521 34" stroke="#eee" fill="none" />
    <path d="M1512 617L1519 629L1521 626V617Z" fill="#c8c8c8" stroke="#e4e4e4" />
    <path d="M1508 30V630" stroke={GREEN} strokeWidth="1.4" />

    {/* trace */}
    <path d="M190 624.500L255.500 595.500L1507 35.5" stroke="#00d400" strokeWidth="1.3" fill="none" />

    {/* value flags */}
    {MARKERS.map((m) => (
      <g key={m.t}>
        <rect x={m.bx} y={m.by} width="242" height="30" fill={GREEN} />
        <rect x={m.bx + 2} y={m.by + 3} width="25" height="25" fill="#c2c0c0" />
        <path d={`M${m.bx + 2.5} ${m.by + 27}V${m.by + 3.5}H${m.bx + 26}`} stroke="#e8e8e8" fill="none" />
        <path d={`M${m.bx + 2} ${m.by + 27.5}H${m.bx + 26.5}V${m.by + 3}`} stroke="#8a8a8a" fill="none" />
        <path d={`M${m.bx + 3.5} ${m.by + 14}Q${m.bx + 6} ${m.by + 10} ${m.bx + 10} ${m.by + 12}L${m.bx + 17} ${m.by + 19}Q${m.bx + 20} ${m.by + 21} ${m.bx + 24.5} ${m.by + 16}`} stroke="#1414f0" strokeWidth="2.2" fill="none" />
        <rect x={m.bx + 6} y={m.by + 9} width="6" height="6" rx="1.5" fill="#f01414" />
        <path d={`M${m.bx + 29.5} ${m.by + 27}V${m.by + 4}H${m.bx + 238}`} stroke="#e2ece2" strokeWidth="1.8" fill="none" />
        <path d={`M${m.bx + 29} ${m.by + 27.5}H${m.bx + 238.5}V${m.by + 4}`} stroke="#7d8f7d" strokeWidth="1.4" fill="none" />
        <text x={m.bx + 32} y={m.by + 24} fontSize="18" letterSpacing="0.08" fill="#0c140c">{m.t}</text>
      </g>
    ))}
    {MARKERS.map((m) => (
      <g key={m.t} stroke="#e6e6e6" fill="none">
        <polyline points={m.line} strokeWidth="1.4" />
        <path d={`M${m.px - 5} ${m.py - 5}L${m.px + 5} ${m.py + 5}M${m.px + 5} ${m.py - 5}L${m.px - 5} ${m.py + 5}`} stroke="#c4c4c4" strokeWidth="2.8" />
        <path d={`M${m.px - 7} ${m.py - 3.500}H${m.px - 4}M${m.px - 7} ${m.py + 3.500}H${m.px - 4}M${m.px + 4} ${m.py - 3.500}H${m.px + 7}M${m.px + 4} ${m.py + 3.500}H${m.px + 7}M${m.px - 4} ${m.py - 7}V${m.py - 4}M${m.px + 4} ${m.py - 7}V${m.py - 4}M${m.px - 4} ${m.py + 4}V${m.py + 7}M${m.px + 4} ${m.py + 4}V${m.py + 7}`} stroke="#c4c4c4" strokeWidth="2.2" />
      </g>
    ))}

    {/* horizontal scrollbars */}
    <rect x="24" y="662" width="98" height="20" fill="#a9a9a9" />
    <rect x="37" y="664" width="51" height="14" fill="#c8c8c8" />
    <path d="M37.5 678V664.500H88" stroke="#eee" fill="none" />
    <path d="M37 678H88V664" stroke="#888" fill="none" />
    <path d="M36 664V678L25 671Z" fill="#c8c8c8" stroke="#e4e4e4" />
    <path d="M108 664V678L121 671Z" fill="#c8c8c8" stroke="#e4e4e4" />
    <rect x="191" y="662" width="1316" height="20" fill="#a9a9a9" />
    <rect x="204" y="664" width="1288" height="14" fill="#c8c8c8" />
    <path d="M204.500 678V664.500H1492" stroke="#eee" fill="none" />
    <path d="M204 678.500H1492V664" stroke="#888" fill="none" />
    <path d="M203 664V678L192 671Z" fill="#c8c8c8" stroke="#e4e4e4" />
    <path d="M1494 664V678L1506 671Z" fill="#c8c8c8" stroke="#e4e4e4" />
  </svg>
);

const RightPanel = () => (
  <div className="flex min-w-0 flex-1 flex-col border-b-[3px] border-l-[2px] border-[#3a3935]">
    <div className="flex h-[35px] bg-[#d4cfc8]">
      <div className="flex w-[172px] shrink-0 items-center bg-[#000088] pl-[20px] text-[#dcdcf0]">
        <span className="w-[114px] leading-[34px] whitespace-nowrap">waveview 1</span>
        <Svg w={14} h={13}><path d="M1.500 1L12.500 12M12.500 1L1.500 12" stroke="#fff" strokeWidth="2.4" /></Svg>
      </div>
      <div className="h-[35px] flex-1 border-b-2 border-[#f8f8f5]" />
    </div>
    <div className="min-w-0 overflow-hidden border-l-[3px] border-[#e9e7e3]">
      <Toolbar />
      <div className="h-[2px] bg-[#77746e]" />
      <Plot />
    </div>
  </div>
);

/* ---------- page ---------- */

export default function App() {
  return (
    <div className="flex h-[1005px] w-[1909px] flex-col overflow-hidden bg-[#d4cfc8] font-['DejaVu_Sans',sans-serif] text-[17.8px] text-[#161616]">
      {/* title bar */}
      <div className="flex h-[45px] shrink-0 items-center rounded-tl-[9px] bg-[#f3f3f3] pl-[13px] font-['Open_Sans','Noto_Sans',sans-serif] text-[17px] text-black">
        <div className="mt-[-3px]"><AppLogo /></div>
        <span className="mt-[-2px] ml-[6px] w-[433px] text-[17.5px] tracking-[-0.28px] whitespace-nowrap">Custom WaveView Version O-2018.09 Synopsys, Inc.</span>
        <span className="mt-[-2px] text-[17.5px] tracking-[-0.42px] whitespace-nowrap">@hera3.ece.tamu.edu</span>
        <div className="mt-[-2px] mr-[15px] ml-auto flex gap-[54px]">
          <Svg w={16} h={16}><path d="M0 8.500H16" stroke="#000" strokeWidth="1.200" /></Svg>
          <Svg w={16} h={16}><rect x="1" y="1" width="14" height="14" rx="1.500" stroke="#000" strokeWidth="1.400" /></Svg>
          <Svg w={16} h={16}><path d="M1 1L15 15M15 1L1 15" stroke="#000" strokeWidth="1.400" /></Svg>
        </div>
      </div>

      {/* menu tabs */}
      <div className="flex h-[34px] shrink-0 items-stretch bg-[#b8b8b8] leading-[37px]">
        <div className="w-[67px] pl-[21px]">File</div>
        <div className="w-[127px] bg-[#d4cfc8] pl-[3px] text-center leading-[35px]">Waveform</div>
        <div className="ml-[20px]">Tools</div>
        <div className="ml-[38px]">Configuration</div>
        <div className="mt-[3px] ml-auto flex w-[119px] shrink-0 overflow-hidden">
          <Svg w={22} h={24}>
            <path d="M2 11V7Q8 -1 15.500 5L20 1V11H10.500L13.500 8Q9 5 6 11Z" fill="#7aaee2" stroke="#2f66a8" />
            <path d="M20 13V17Q14 25 6.500 19L2 23V13H11.500L8.500 16Q13 19 16 13Z" fill="#7aaee2" stroke="#2f66a8" />
          </Svg>
          <Svg w={20} h={20} className="mt-[4px] ml-[14px]">
            <path d="M1 2H19V18H1ZM1 5H19" stroke="#1b74ba" strokeWidth="2" />
            <path d="M10 17V8M6 12L10 8L14 12" stroke="#1b74ba" strokeWidth="2" />
          </Svg>
          <Svg w={24} h={24} className="ml-[11px]">
            <circle cx="12" cy="12" r="11.500" fill="#4a82d2" stroke="#2e62b0" />
            <text x="12" y="18.500" textAnchor="middle" fontWeight="bold" fontSize="18" fill="#fff">?</text>
          </Svg>
          <Svg w={24} h={24} className="ml-[10px]">
            <circle cx="12" cy="12" r="11.500" fill="#4a82d2" stroke="#2e62b0" />
            <text x="12" y="18.500" textAnchor="middle" fontWeight="bold" fontSize="18" fill="#fff">i</text>
          </Svg>
        </div>
      </div>

      {/* ribbon */}
      <div className="flex h-[137px] shrink-0">
        <Group label="File" className="w-[301px]">
          <Tall icon={<OpenFolder />} lines={["Open", "Waveform"]} className="w-[108px]" />
          <ListBox gap="gap-[7px]" className="ml-[3px] w-[186px]" items={[[I.update, "Update"], [I.print, "Print"], [I.exp, "Export"], [I.dump, "Dump Screen"], [I.dumpAll, "Dump All Screen"]]} />
        </Group>
        <Sep />
        <Group label="Add" className="w-[138px]">
          <Tall icon={<WaveViewIcon />} lines={["Wave", "View"]} className="w-[69px]" />
          <Tall icon={<TableViewIcon />} lines={["Table", "View"]} className="w-[72px]" />
        </Group>
        <Sep />
        <Group label="Panel" className="w-[465px]">
          <ListBox className="ml-[4px] w-[193px]" items={[[I.xy, "X-Y"], [I.eye, "Eye Diagram"], [I.tab, "Tabular"], [I.hist, "Histogram"], [I.smith, "Smith Chart"]]} />
          <div className="mt-[4px] ml-[14px] w-[124px] shrink-0">
            <SmallBtn icon={I.cursor} text="Cursor" caret />
            <SmallBtn icon={I.action} text="Action" caret />
            <SmallBtn icon={I.display} text="Display" caret />
          </div>
          <div className="mt-[4px] w-[128px] shrink-0">
            <SmallBtn icon={I.radix} text="Radix" caret />
            <SmallBtn icon={I.signame} text="SigName" caret />
            <SmallBtn icon={I.height} text="Height" caret />
          </div>
        </Group>
        <Sep />
        <Group label="Utilities" className="w-[477px]">
          <Tall icon={<EquationIcon />} lines={["Equation", "Builder"]} className="w-[97px]" />
          <Tall icon={<MeasureIcon />} lines={["Measure", "Tool"]} className="w-[91px]" />
          <Tall icon={<Binoculars />} lines={["Signal", "Finder"]} className="w-[76px]" />
          <ListBox gap="gap-[7px]" className="w-[209px]" items={[[I.fft, "FFT/DFT"], [I.d2a, "D to A"], [I.a2d, "A to D"], [I.jitter, "Jitter vs. Time"], [I.hspice, "HSPICE Measure"]]} />
        </Group>
        <Sep />
        <Group label="" className="w-[68px]">
          <BoxBtn text="Axis" className="w-[68px]">
            <Svg w={26} h={24}>
              <path d="M1.500 1V22.500H26" stroke="#555" strokeWidth="1.500" />
              <path d="M5 16H23M18 11.500L23 16L18 20.500" stroke="#a010a8" strokeWidth="2" />
            </Svg>
          </BoxBtn>
        </Group>
        <Sep />
        <Group label="Edit" className="w-[165px]">
          <div className="mt-[4px] ml-[8px]">
            <SmallBtn icon={I.undo} text="Undo" />
            <SmallBtn icon={I.del} text="Delete All" />
            <SmallBtn icon={I.sel} text="Select View" caret gap="gap-[8px]" caretClass="ml-[8px]" />
          </div>
        </Group>
        <Sep />
        <Group label="" className="w-[101px]">
          <BoxBtn text="Settings" className="w-[101px]">
            <Svg w={21} h={20}>
              <rect width="21" height="20" rx="1" fill="#6a6255" />
              <rect x="1" y="1" width="6" height="8" fill="#a5c83c" />
              <rect x="7.500" y="1" width="6" height="8" fill="#e8c85a" />
              <rect x="14" y="1" width="6" height="8" fill="#e88a4a" />
              <rect x="1" y="11" width="6" height="8" fill="#5a8fd8" />
              <rect x="7.500" y="11" width="6" height="8" fill="#a08fd0" />
              <rect x="14" y="11" width="6" height="8" fill="#d85a5a" />
            </Svg>
          </BoxBtn>
        </Group>
        <Sep />
      </div>

      {/* panels */}
      <div className="flex h-[761px] shrink-0 border-t-2 border-[#85827b]">
        <LeftPanel />
        <div className="w-[7px] shrink-0 border-r border-[#8f8c85]" />
        <RightPanel />
      </div>

      {/* status bar */}
      <div className="flex h-[28px] shrink-0 justify-end pt-[3px] pr-[15px]">
        <div className="flex w-[230px] border-t-[3px] border-r-2 border-l-4 border-t-[#85827b] border-r-[#f8f8f5] border-l-[#85827b]">
          <div className="flex-1 border-r-2 border-[#f8f8f5]" />
          <div className="w-[62px] pt-[4px] text-center leading-[22px] whitespace-nowrap">0%</div>
        </div>
      </div>
    </div>
  );
}
